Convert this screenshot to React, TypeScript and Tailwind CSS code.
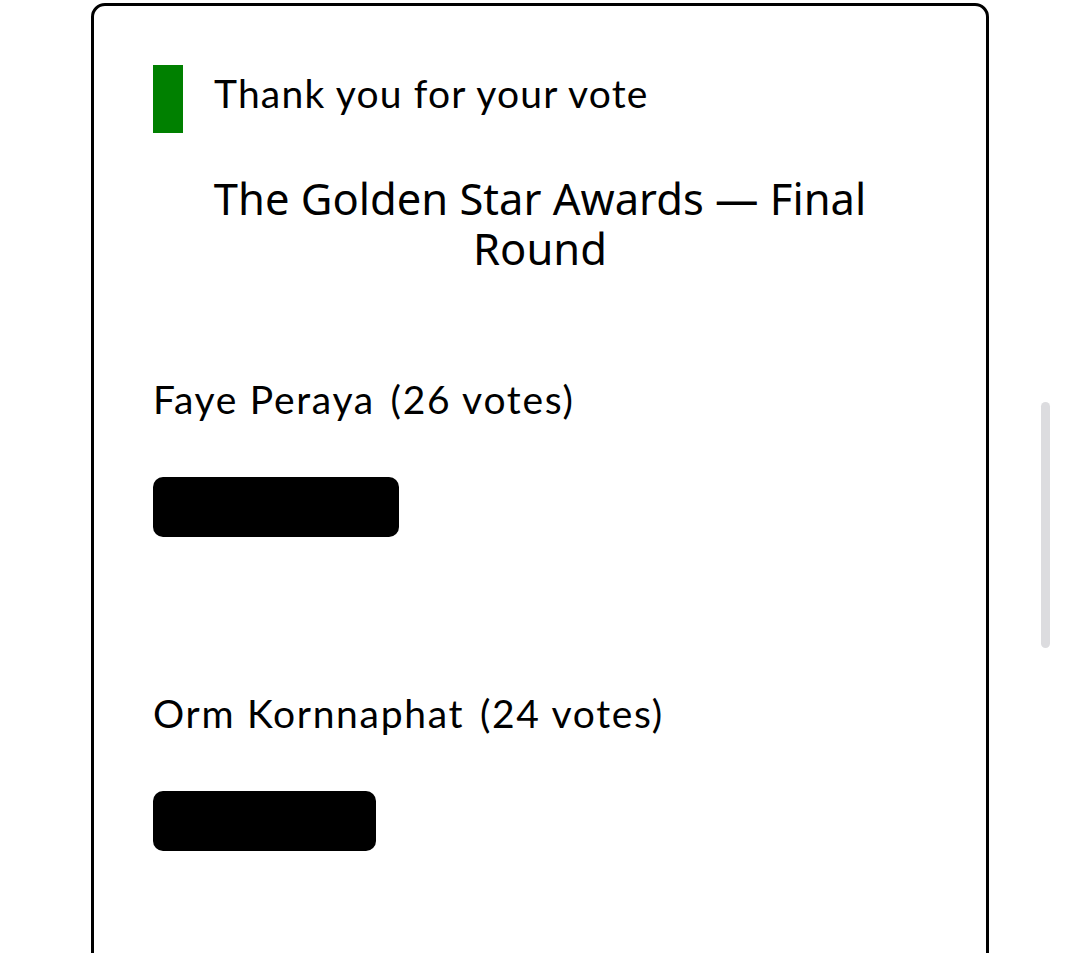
import React from "react";

type Nominee = {
	name: string;
	votes: number;
	barWidth: number;
};

const nominees: Nominee[] = [
	{ name: "Faye Peraya", votes: 26, barWidth: 246 },
	{ name: "Orm Kornnaphat", votes: 24, barWidth: 223 },
];

const App: React.FC = () => {
	return (
		<div className="relative h-[953px] overflow-hidden bg-white text-black">
			<div className="mx-auto mt-[3px] h-[1000px] w-[898px] rounded-[14px] border-[3px] border-black px-[59px] pt-[59px]">
				{/* Confirmation */}
				<div className="flex items-center gap-[31px]">
					<div className="h-[68px] w-[30px] shrink-0 bg-[#008000]" />
					<p className="pb-[12px] font-['Lato',sans-serif] text-[39px] leading-[47px] tracking-[1.2px]">
						Thank you for your vote
					</p>
				</div>

				{/* Poll title */}
				<h1 className="mt-[40px] text-center font-['Noto_Sans',sans-serif] text-[43.5px] leading-[50px] font-normal">
					The Golden Star Awards — Final Round
				</h1>

				{/* Results */}
				<div className="mt-[103px] flex flex-col gap-[153px]">
					{nominees.map((n) => (
						<div key={n.name} className="flex flex-col">
							<p className="font-['Lato',sans-serif] text-[39px] leading-[47px] tracking-[1.7px]">
								{n.name} <span className="ml-[4px]">({n.votes} votes)</span>
							</p>
							<div
								className="mt-[54px] h-[60px] rounded-[10px] bg-black"
								style={{ width: n.barWidth }}
							/>
						</div>
					))}
				</div>
			</div>

			{/* overlay scroll indicator */}
			<div className="absolute left-[1041px] top-[402px] h-[246px] w-[9px] rounded-full bg-[#dcdcdf]" />
		</div>
	);
};

export default App;
